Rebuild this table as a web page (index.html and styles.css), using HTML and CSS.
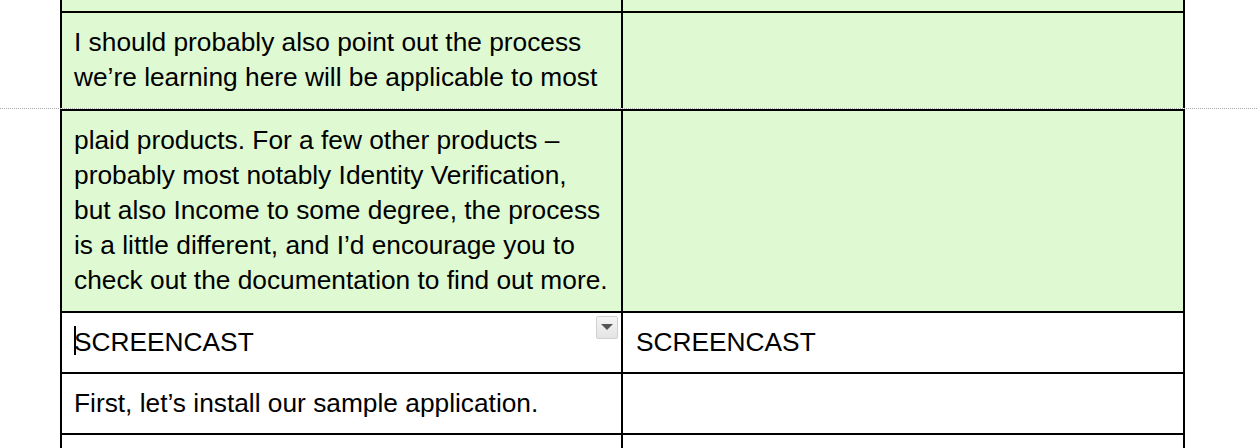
FILE: index.html
```html
<!DOCTYPE html>
<html>
<head>
<meta charset="utf-8">
<link rel="stylesheet" href="styles.css">
</head>
<body>
<div class="doc">
  <div class="segment seg-top">
    <div class="row row-tail green">
      <div class="cell"></div>
      <div class="cell"></div>
    </div>
    <div class="row row-split-a green">
      <div class="cell text">I should probably also point out the process<br>we’re learning here will be applicable to most</div>
      <div class="cell"></div>
    </div>
  </div>
  <div class="page-break"></div>
  <div class="segment seg-bottom">
    <div class="row row-split-b green">
      <div class="cell text">plaid products. For a few other products –<br>probably most notably Identity Verification,<br>but also Income to some degree, the process<br>is a little different, and I’d encourage you to<br>check out the documentation to find out more.</div>
      <div class="cell"></div>
    </div>
    <div class="row">
      <div class="cell text has-tools">SCREENCAST<span class="caret"></span><span class="dropdown"><span class="tri"></span></span></div>
      <div class="cell text">SCREENCAST</div>
    </div>
    <div class="row">
      <div class="cell text">First, let’s install our sample application.</div>
      <div class="cell"></div>
    </div>
    <div class="row row-next">
      <div class="cell"></div>
      <div class="cell"></div>
    </div>
  </div>
</div>
</body>
</html>
```

FILE: styles.css
```css
html, body {
  margin: 0;
  padding: 0;
  background: #ffffff;
  height: 448px;
  overflow: hidden;
}

.doc {
  font-family: "Liberation Sans", Arial, sans-serif;
  font-size: 26.3px;
  line-height: 35px;
  color: #000;
}

.segment {
  margin-left: 60px;
  width: 1125px;
  box-sizing: border-box;
  border-left: 2px solid #000;
  border-right: 2px solid #000;
}

.seg-bottom {
  border-top: 2px solid #000;
}

.row {
  display: grid;
  grid-template-columns: 561px 560px;
  border-bottom: 2px solid #000;
}

.row.green {
  background: #dff9d3;
}

.cell {
  box-sizing: border-box;
}

.cell:first-child {
  border-right: 2px solid #000;
}

.text {
  padding: 12px 12px 12px 12px;
  white-space: nowrap;
}

.cell:last-child.text {
  padding-left: 13px;
}

.row-tail {
  height: 11px;
}

.row-split-a {
  border-bottom: none;
  height: 95px;
}

.row-split-b .text {
  padding-top: 12px;
  padding-bottom: 13px;
}

.has-tools {
  position: relative;
  padding-bottom: 11px;
}

.row-next {
  height: 20px;
  border-bottom: none;
}

.page-break {
  height: 1px;
  background: repeating-linear-gradient(90deg, #a8a8a8 0 1px, #ffffff 1px 2px);
}

.caret {
  position: absolute;
  left: 12px;
  top: 13px;
  width: 2px;
  height: 29px;
  background: #000;
}

.dropdown {
  position: absolute;
  left: 534px;
  top: 3px;
  width: 22px;
  height: 23px;
  box-sizing: border-box;
  border: 1px solid #d0d0d0;
  border-radius: 2px;
  background: linear-gradient(#f4f4f4, #e4e4e4);
  display: flex;
  align-items: center;
  justify-content: center;
}

.tri {
  width: 0;
  height: 0;
  border-left: 6px solid transparent;
  border-right: 6px solid transparent;
  border-top: 6px solid #555;
  margin-top: -1px;
}
```
